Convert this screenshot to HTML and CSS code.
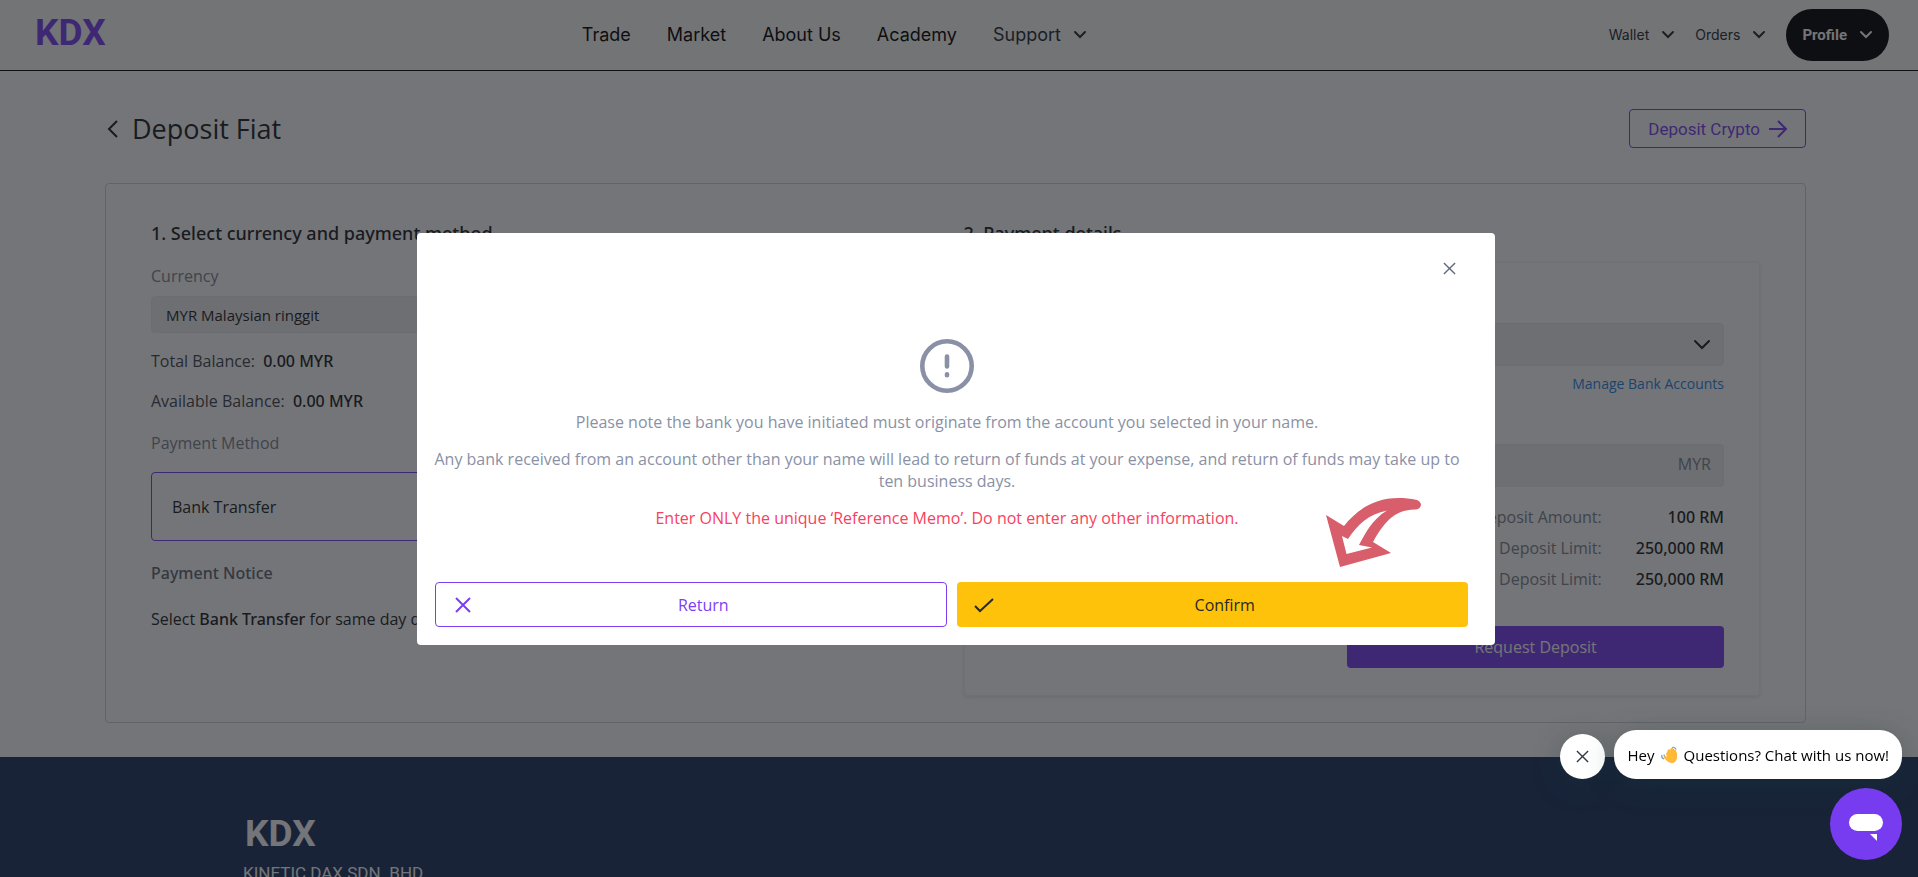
FILE: index.html
```html
<!DOCTYPE html>
<html lang="en">
<head>
<meta charset="utf-8">
<title>KDX – Deposit Fiat</title>
<link rel="stylesheet" href="styles.css">
</head>
<body>
<div class="page">
  <header class="topbar">
    <a class="logo" href="#">KDX</a>
    <nav class="nav">
      <a href="#">Trade</a>
      <a href="#">Market</a>
      <a href="#">About Us</a>
      <a href="#">Academy</a>
      <button class="nav-menu" type="button">Support <svg class="chev" viewBox="0 0 14 10"><path d="M2 2l5 5 5-5"/></svg></button>
    </nav>
    <div class="account">
      <button class="account-menu" type="button">Wallet <svg class="chev" viewBox="0 0 14 10"><path d="M2 2l5 5 5-5"/></svg></button>
      <button class="account-menu" type="button">Orders <svg class="chev" viewBox="0 0 14 10"><path d="M2 2l5 5 5-5"/></svg></button>
      <button class="profile" type="button">Profile <svg class="chev" viewBox="0 0 14 10"><path d="M2 2l5 5 5-5"/></svg></button>
    </div>
  </header>

  <main class="main">
    <div class="title-row">
      <a class="back" href="#" aria-label="Back"><svg viewBox="0 0 12 18"><path d="M10 1L2 9l8 8"/></svg></a>
      <h1 class="title">Deposit Fiat</h1>
      <a class="crypto" href="#">Deposit Crypto <svg viewBox="0 0 20 18"><path d="M1 9h17M10 1l8 8-8 8"/></svg></a>
    </div>

    <div class="card">
      <section class="col">
        <h2 class="heading">1. Select currency and payment method</h2>
        <label class="label" for="currency">Currency</label>
        <input class="currency" id="currency" type="text" value="MYR Malaysian ringgit">
        <p class="balance">Total Balance: <b>0.00 MYR</b></p>
        <p class="balance">Available Balance: <b>0.00 MYR</b></p>
        <p class="label method-label">Payment Method</p>
        <button class="method" type="button">Bank Transfer</button>
        <h3 class="notice-title">Payment Notice</h3>
        <p class="notice">Select <b>Bank Transfer</b> for same day deposit.</p>
      </section>
      <section class="col">
        <h2 class="heading">2. Payment details</h2>
        <form class="details">
          <label class="label" for="bank">Bank Account</label>
          <div class="field">
            <select class="control" id="bank"><option></option></select>
            <svg class="field-icon" viewBox="0 0 18 12"><path d="M2 2l7 7 7-7"/></svg>
          </div>
          <a class="manage" href="#">Manage Bank Accounts</a>
          <label class="label" for="amount">Amount</label>
          <div class="field">
            <input class="control" id="amount" type="text">
            <span class="unit">MYR</span>
          </div>
          <dl class="limits">
            <dt>Minimum Deposit Amount:</dt><dd>100 RM</dd>
            <dt>Maximum Deposit Limit:</dt><dd>250,000 RM</dd>
            <dt>Remaining Deposit Limit:</dt><dd>250,000 RM</dd>
          </dl>
          <button class="request" type="button">Request Deposit</button>
        </form>
      </section>
    </div>
  </main>

  <footer class="footer">
    <p class="footer-logo">KDX</p>
    <p class="company">KINETIC DAX SDN. BHD</p>
  </footer>
</div>

<div class="backdrop">
  <div class="modal" role="dialog" aria-modal="true">
    <button class="close" type="button" aria-label="Close"><svg viewBox="0 0 14 14"><path d="M1 1l12 12M13 1L1 13"/></svg></button>
    <div class="message">
      <svg class="alert" viewBox="0 0 54 54"><circle cx="27" cy="27" r="24.7"/><path d="M27 17.500v10M27 35.300v1"/></svg>
      <p>Please note the bank you have initiated must originate from the account you selected in your name.</p>
      <p>Any bank received from an account other than your name will lead to return of funds at your expense, and return of funds may take up to ten business days.</p>
      <p class="warning">Enter ONLY the unique ‘Reference Memo’. Do not enter any other information.</p>
    </div>
    <div class="actions">
      <button class="action return" type="button"><svg viewBox="0 0 20 16"><path d="M3 1l14 14M17 1L3 15"/></svg><span>Return</span></button>
      <button class="action confirm" type="button"><svg viewBox="0 0 20 16"><path d="M1 9l5 5L19 2"/></svg><span>Confirm</span></button>
    </div>
    <svg class="pointer" viewBox="0 0 96 70"><path fill-rule="evenodd" d="M0 17L18 28C34 8 56-5 91 2Q95 4 95 7Q94 11 90 11.500C68 11 57 26 47 44L65 55L14 69ZM16 38L20.500 56L46 49.500L33 47C38 38 45 22 61 12.500C43 16 31 27 22 41Z"/></svg>
  </div>
</div>

<aside class="chat">
  <div class="chat-row">
    <button class="chat-close" type="button" aria-label="Dismiss"><svg viewBox="0 0 14 14"><path d="M1 1l12 12M13 1L1 13"/></svg></button>
    <div class="bubble">Hey
      <svg class="wave" viewBox="0 0 17 17"><path class="lines" d="M11 1.500q3-1 4 2M10 3q2 0 3 1M1 9q-1 3 2 4M3 8.500q0 2 2 3"/><path class="hand" d="M5 8L7 4q1-2 2 0l1-2q2-1 2 1l1 1q2-1 2 1l1 2v5q-1 5-5 5-3 0-5-2l-3-3q-1-2 1-2l2 1z"/></svg>
      Questions? Chat with us now!</div>
  </div>
  <button class="launcher" type="button" aria-label="Open chat"><svg viewBox="0 0 36 36"><rect x="1" y="8" width="34" height="17" rx="8.500"/><path d="M22 28h7v7z"/></svg></button>
</aside>
</body>
</html>
```
FILE: styles.css
```css
* { box-sizing: border-box; }
html, body { height: 100%; }
body {
  margin: 0;
  overflow: hidden;
  font-family: "Open Sans", sans-serif;
  font-size: 16px;
  line-height: 22px;
  color: #1a1e24;
  background: #fff;
}
h1, h2, h3, p, dl, dd { margin: 0; }
a { color: inherit; text-decoration: none; }
button { font: inherit; color: inherit; background: none; border: 0; padding: 0; cursor: pointer; }
b, .heading, .notice-title, .limits dd { font-family: "Noto Sans", sans-serif; font-weight: 500; }
svg { fill: none; stroke: currentColor; flex: none; }

/* Header */
.topbar {
  display: grid;
  grid-template-columns: 15fr auto 22fr;
  align-items: center;
  height: 71px;
  padding: 0 29px 0 35px;
  border-bottom: 1px solid #000;
  background: #fdfdfa;
  font-family: Inter, sans-serif;
}
.logo, .footer-logo { font-family: Roboto, sans-serif; font-size: 37px; line-height: 40px; font-weight: 700; }
.logo { color: #7b3ff2; padding-bottom: 4px; }
.nav { display: flex; align-items: center; gap: 36px; font-size: 18px; color: #000; }
.nav-menu, .account-menu, .profile { display: flex; align-items: center; gap: 12px; }
.nav-menu, .account-menu { color: #24292e; }
.chev { width: 14px; height: 10px; stroke-width: 2; stroke-linecap: round; }
.account { display: flex; align-items: center; justify-content: flex-end; gap: 20px; font-size: 14px; }
.profile {
  height: 52px;
  padding: 0 16px;
  border-radius: 26px;
  background: #000;
  color: #fff;
  font-family: Roboto, sans-serif;
  font-size: 15px;
  font-weight: 700;
}

/* Page body */
.main { padding: 38px 112px 34px 105px; }
.title-row { display: flex; align-items: center; margin-bottom: 35px; }
.back { display: flex; padding: 0 13px 0 2px; }
.back svg { width: 12px; height: 18px; stroke-width: 2; }
.title { font-size: 27px; line-height: 39px; font-weight: 400; }
.crypto {
  display: flex;
  align-items: center;
  gap: 8px;
  height: 39px;
  margin-left: auto;
  padding: 0 17px 0 18px;
  border: 1px solid #7b3ff2;
  border-radius: 4px;
  color: #7b3ff2;
  font-family: Roboto, sans-serif;
  font-size: 17px;
}
.crypto svg { width: 20px; height: 18px; stroke-width: 2; }
.card {
  display: grid;
  grid-template-columns: 1fr 1fr;
  gap: 16px;
  padding: 37px 45px 26px;
  border: 1px solid #d2d3d9;
  border-radius: 4px;
}
.col { display: flex; flex-direction: column; }
.heading { font-size: 18px; line-height: 24px; }
.label { color: #7d848f; }
.col > .label { margin-top: 20px; }
.currency {
  height: 37px;
  margin-top: 9px;
  padding: 0 14px;
  border: 1px solid #ebecee;
  border-radius: 4px;
  background: #f0f0f1;
  color: inherit;
  font: inherit;
  font-size: 15px;
}
.balance { margin-top: 18px; color: #3f464f; }
.currency + .balance { margin-top: 17px; }
.balance b { margin-left: 4px; color: #1a1e24; }
.method {
  height: 69px;
  margin-top: 18px;
  padding: 0 20px;
  border: 1px solid #7b3ff2;
  border-radius: 4px;
  text-align: left;
}
.notice-title { margin-top: 21px; font-size: 16px; color: #5f6772; }
.notice { margin-top: 24px; }
.details {
  display: flex;
  flex-direction: column;
  margin-top: 17px;
  padding: 28px 35px 27px;
  border: 1px solid #f3f3f5;
  border-radius: 4px;
  box-shadow: 0 1px 4px rgba(20, 24, 40, 0.12);
}
.field { position: relative; display: flex; margin-top: 10px; }
.control {
  flex: 1;
  height: 43px;
  padding: 0 14px;
  border: 1px solid #ebecee;
  border-radius: 4px;
  background: #eff0f1;
  font: inherit;
  appearance: none;
}
.field-icon { position: absolute; right: 13px; top: 16px; width: 18px; height: 12px; stroke-width: 2; stroke-linecap: round; }
.unit { position: absolute; right: 13px; top: 9px; color: #7d848f; }
.manage { align-self: flex-end; margin: 7px 0 17px; font-size: 14px; color: #1f86e5; }
.limits {
  display: grid;
  grid-template-columns: 1fr auto;
  column-gap: 34px;
  row-gap: 9px;
  margin: 19px 0 36px;
  text-align: right;
}
.limits dt { color: #7d848f; }
.request {
  align-self: flex-end;
  width: 52%;
  height: 42px;
  border-radius: 4px;
  background: #7b3ff2;
  color: #fff;
}

/* Footer */
.footer { height: 400px; padding: 57px 243px; background: #19325f; color: #fff; }
.footer-logo { padding-left: 2px; }
.company { margin-top: 8px; font-family: Roboto, sans-serif; font-size: 17px; }

/* Confirmation dialog */
.backdrop {
  position: fixed;
  inset: 0;
  padding: 233px 6px 0 0;
  background: rgba(23, 25, 30, 0.6);
}
.modal {
  position: relative;
  width: 1078px;
  max-width: 100%;
  margin: 0 auto;
  padding: 18px 10px;
  border-radius: 4px;
  background: #fff;
}
.close { display: flex; margin: 11px 29px 0 auto; width: 13px; height: 13px; color: #5f6a7c; }
.close svg, .chat-close svg { width: 13px; height: 13px; stroke-width: 1.500; }
.message {
  display: flex;
  flex-direction: column;
  align-items: center;
  gap: 15px;
  padding-right: 18px;
  margin-top: 64px;
  text-align: center;
  color: #8a91a6;
}
.alert { width: 54px; height: 54px; margin-bottom: 3px; stroke-width: 4.600; stroke-linecap: round; }
.warning { color: #f8415e; }
.actions { display: grid; grid-template-columns: 1fr 1fr; gap: 10px; margin: 53px 17px 0 8px; }
.action {
  display: flex;
  align-items: center;
  height: 45px;
  padding: 0 12px 0 17px;
  border-radius: 4px;
}
.action span { flex: 1; }
.action svg { width: 20px; height: 16px; stroke-width: 2; }
.return { border: 1px solid #7b3ff2; color: #7b3ff2; }
.confirm { background: #ffc20a; color: #2a2a26; }
.pointer { position: absolute; right: 73px; bottom: 77px; width: 96px; height: 70px; fill: #d85e6b; stroke: none; }

/* Chat widget */
.chat {
  position: fixed;
  right: 16px;
  bottom: 17px;
  display: flex;
  flex-direction: column;
  align-items: flex-end;
  gap: 9px;
}
.chat-row { display: flex; align-items: flex-end; gap: 9px; }
.chat-close {
  display: grid;
  place-items: center;
  width: 45px;
  height: 45px;
  border-radius: 50%;
  background: #fff;
  color: #343b45;
  box-shadow: 0 6px 30px rgba(22, 60, 60, 0.3);
}
.bubble {
  display: flex;
  align-items: center;
  gap: 6px;
  height: 49px;
  padding: 0 13px 0 14px;
  border-radius: 22px;
  background: #fff;
  color: #000;
  font-size: 15px;
  box-shadow: 0 6px 30px rgba(22, 60, 60, 0.3);
}
.wave { width: 17px; height: 17px; }
.wave .lines { stroke: #5f9fd8; stroke-width: 1.200; }
.wave .hand { fill: #ffb934; stroke: none; }
.launcher {
  display: grid;
  place-items: center;
  width: 72px;
  height: 72px;
  border-radius: 50%;
  background: #783cf0;
}
.launcher svg { width: 36px; height: 36px; fill: #fff; stroke: none; }
```
